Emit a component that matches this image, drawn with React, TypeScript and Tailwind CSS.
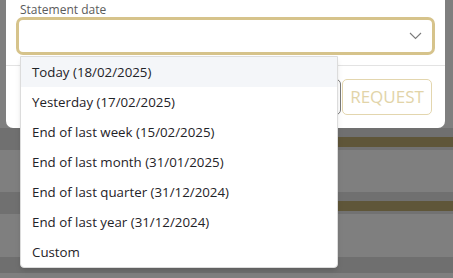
import React from 'react';

const options = [
  'Today (18/02/2025)',
  'Yesterday (17/02/2025)',
  'End of last week (15/02/2025)',
  'End of last month (31/01/2025)',
  'End of last quarter (31/12/2024)',
  'End of last year (31/12/2024)',
  'Custom',
];

function BackgroundRow({ gold }: { gold: boolean }) {
  return (
    <div className="flex h-[22px]">
      <div className="w-[200px] bg-[#707070]" />
      <div className="flex flex-1 flex-col">
        <div className="h-[9px] bg-[#707070]" />
        <div className={gold ? 'h-[10px] bg-[#5f5639]' : 'h-[10px] bg-[#707070]'} />
        <div className="h-[3px] bg-[#727272]" />
      </div>
    </div>
  );
}

export default function App() {
  return (
    <div
      className="relative h-[278px] w-[453px] overflow-hidden bg-[#7f7f7f]"
      style={{ fontFamily: '"Open Sans", "Noto Sans", sans-serif' }}
    >
      <div className="ml-[6px] mr-[8px] h-[128px] rounded-b-[7px] bg-white">
        <div className="pl-[10px] pr-[10px] pt-[2px]">
          <label className="block pl-[4px] text-[12px] leading-[15px] text-[#5b5b5b]">Statement date</label>
          <div className="flex h-[38px] items-center justify-end rounded-[7px] border-[3px] border-[#d6c38b] bg-white pr-[10px]">
            <svg width="13" height="8" viewBox="0 0 13 8" fill="none">
              <path d="M1 1l5.5 5.5L12 1" stroke="#7a7a7a" strokeWidth="1.1" />
            </svg>
          </div>
        </div>
        <div className="mt-[10px] h-px bg-[#e3e3e3]" />
        <div className="flex justify-end gap-[1px] pr-[13px] pt-[13px]">
          <div className="h-[36px] w-[80px] rounded-[5px] border border-[#7a7a7a]" />
          <button className="h-[36px] w-[90px] rounded-[5px] border border-[#e3d6ae] text-[17px] text-[#e2d4a8]">
            REQUEST
          </button>
        </div>
      </div>

      <div>
        <BackgroundRow gold />
        <div className="h-[42px]" />
        <BackgroundRow gold />
        <div className="h-[43px]" />
        <div className="h-[16px] bg-[#6f6f6f]" />
      </div>

      <ul className="absolute left-[20px] top-[56px] w-[318px] overflow-hidden rounded-b-[4px] border border-[#dcdcdc] bg-white shadow-md">
        {options.map((o, i) => (
          <li
            key={o}
            className={`flex h-[30px] items-center px-[11px] pt-[1px] text-[13.3px] text-[#1f2328] ${i === 0 ? 'bg-[#f4f6f9]' : ''}`}
          >
            {o}
          </li>
        ))}
      </ul>
    </div>
  );
}
